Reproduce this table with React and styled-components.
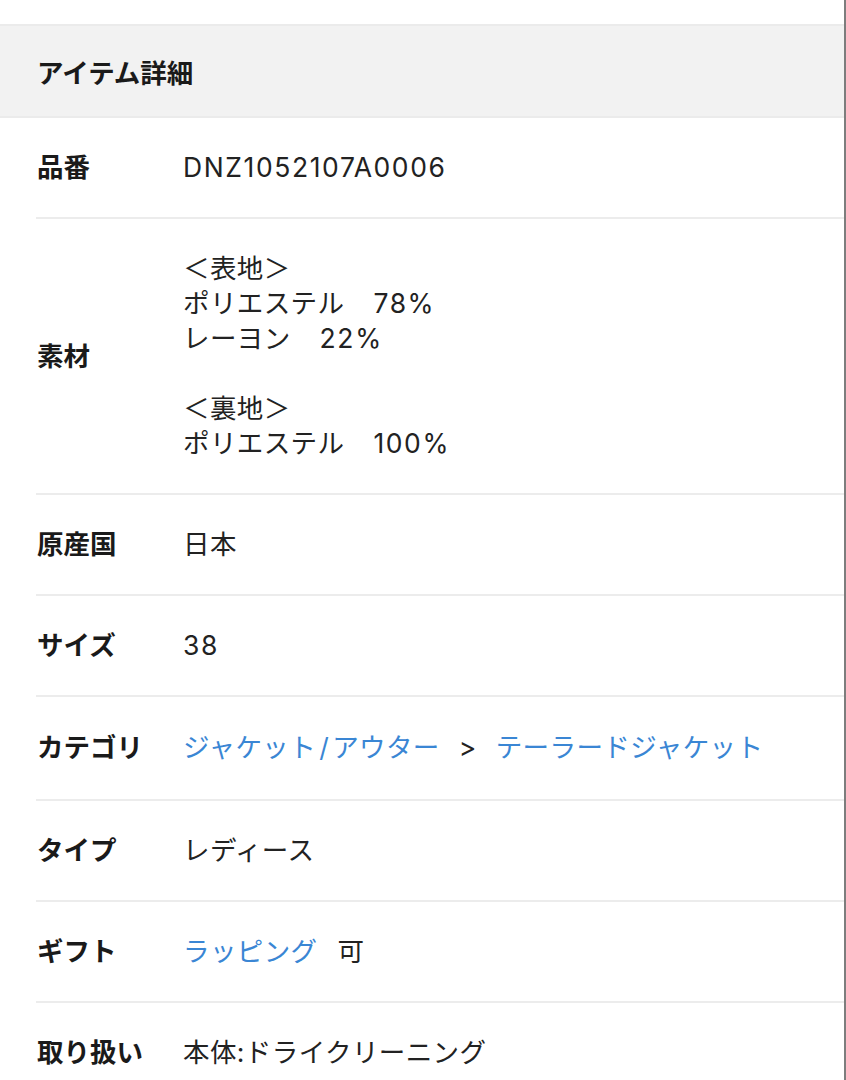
import React from "react";
import styled, { createGlobalStyle } from "styled-components";

const Global = createGlobalStyle`
  html, body {
    margin: 0;
    padding: 0;
    background: #fff;
  }
  body {
    font-family: Inter, "Noto Sans CJK JP", sans-serif;
    color: #222;
    -webkit-font-smoothing: antialiased;
  }
`;

/* page frame */
const Page = styled.main`
  width: 846px;
  min-height: 1080px;
  box-sizing: border-box;
  padding-top: 24px;
  border-right: 2px solid #7d7d7d;
  overflow: hidden;
`;

/* section header */
const Header = styled.h2`
  margin: 0;
  height: 94px;
  box-sizing: border-box;
  display: flex;
  align-items: center;
  padding: 0 37px;
  background: #f2f2f2;
  border-top: 2px solid #ebebeb;
  border-bottom: 2px solid #ebebeb;
  font-size: 26.5px;
  font-weight: 700;
  color: #1a1a1a;
`;

const List = styled.dl`
  margin: 0 0 0 36px;
`;

const Row = styled.div`
  display: grid;
  grid-template-columns: 147px 1fr;
  align-items: center;
  padding: ${(p) => (p.$roomy ? "33px 0 34px" : "32px 0")};
  border-bottom: 2px solid #ececec;
  font-size: 26.5px;
  line-height: 35px;
`;

const Label = styled.dt`
  margin: 0;
  padding-left: 1px;
  font-weight: 700;
  color: #1a1a1a;
`;

const Value = styled.dd`
  margin: 0;
  color: #222;
  letter-spacing: 0.4px;
`;

/* latin runs are set a little wider, like the original font */
const Latin = styled.span`
  letter-spacing: 1.6px;
`;

const Link = styled.a`
  color: #3a86d4;
  text-decoration: none;
`;

const Slash = styled.span`
  margin: 0 3px;
`;

const Sep = styled.span`
  margin: 0 19px;
  color: #222;
`;

const Spacer = styled.span`
  display: inline-block;
  width: ${(p) => p.$w}px;
`;

export default function App() {
  return (
    <>
      <Global />
      <Page>
        <Header>アイテム詳細</Header>
        <List>
          <Row>
            <Label>品番</Label>
            <Value>
              <Latin>DNZ1052107A0006</Latin>
            </Value>
          </Row>
          <Row>
            <Label>素材</Label>
            <Value>
              ＜表地＞
              <br />
              ポリエステル<Spacer $w={29} />
              <Latin>78%</Latin>
              <br />
              レーヨン<Spacer $w={29} />
              <Latin>22%</Latin>
              <br />
              <br />
              ＜裏地＞
              <br />
              ポリエステル<Spacer $w={29} />
              <Latin>100%</Latin>
            </Value>
          </Row>
          <Row>
            <Label>原産国</Label>
            <Value>日本</Value>
          </Row>
          <Row>
            <Label>サイズ</Label>
            <Value>
              <Latin>38</Latin>
            </Value>
          </Row>
          <Row $roomy>
            <Label>カテゴリ</Label>
            <Value>
              <Link href="#">
                ジャケット<Slash>/</Slash>アウター
              </Link>
              <Sep>&gt;</Sep>
              <Link href="#">テーラードジャケット</Link>
            </Value>
          </Row>
          <Row>
            <Label>タイプ</Label>
            <Value>レディース</Value>
          </Row>
          <Row>
            <Label>ギフト</Label>
            <Value>
              <Link href="#">ラッピング</Link>
              <Spacer $w={20} />可
            </Value>
          </Row>
          <Row>
            <Label>取り扱い</Label>
            <Value>本体:ドライクリーニング</Value>
          </Row>
        </List>
      </Page>
    </>
  );
}
